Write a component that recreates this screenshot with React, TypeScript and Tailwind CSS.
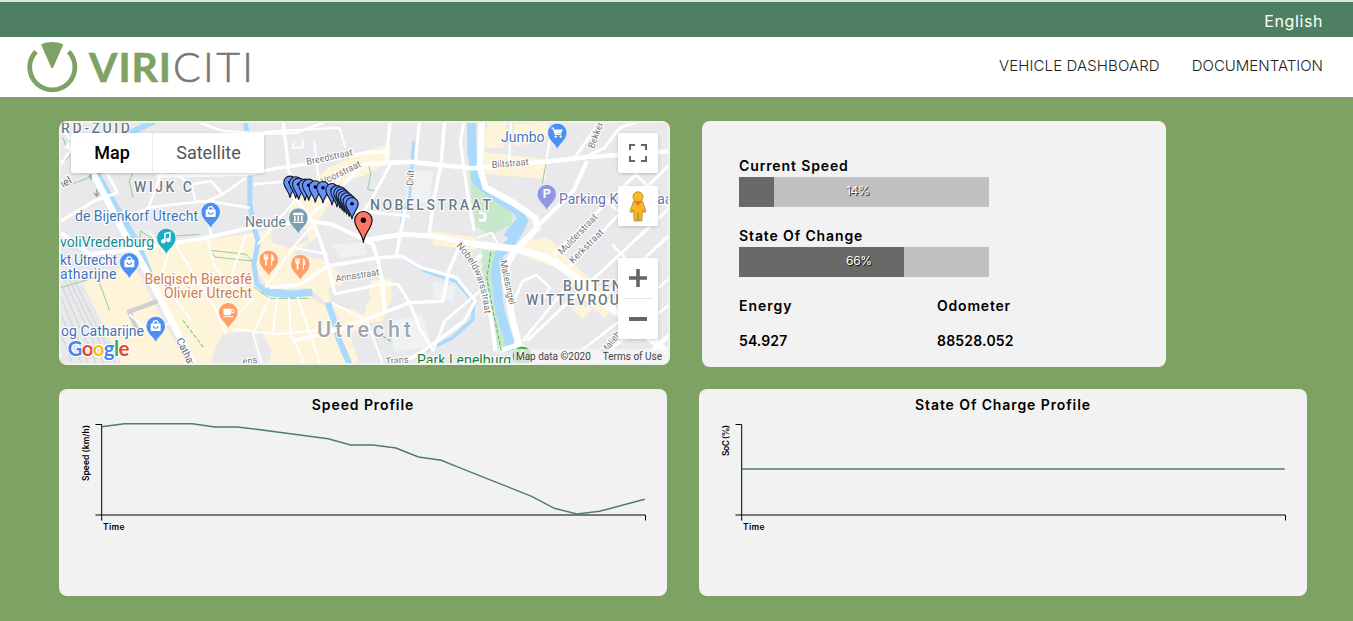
import type { ReactNode } from "react";

/* ---------- Logo ---------- */

function Logo() {
  return (
    <svg width="226" height="54" viewBox="26 40 226 54" aria-label="ViriCiti" role="img">
      <path d="M36 51.6 A22.6 22.6 0 1 0 68.6 51.6" fill="none" stroke="#7ea263" strokeWidth="4.8" />
      <path d="M41 44.3 Q52.2 39.6 63.4 44.3 L53.2 67.4 Q52.2 69 51.2 67.4 Z" fill="#7ea263" />
      <text x="89" y="81.5" textLength="82" fontSize="41" fontWeight="700" fill="#7ea263" stroke="#7ea263" strokeWidth="0.6" fontFamily="Lato, sans-serif">
        VIRI
      </text>
      <text x="173" y="81.5" textLength="80" fontSize="41" fontWeight="300" fill="#77777a" stroke="#77777a" strokeWidth="0.6" fontFamily="Lato, sans-serif">
        CITI
      </text>
    </svg>
  );
}

/* ---------- Map drawing ---------- */

const land = [
  "M215 385 L390 355 L500 335 L503 490 L535 518 L640 525 L690 560 L740 620 L770 725 L335 725 L205 430 Z",
  "M60 485 L190 425 L325 725 L160 725 Z",
  "M508 335 L585 300 L600 230 L700 235 L665 300 L660 350 L600 400 L690 420 L720 455 L740 560 L800 590 L760 650 L700 560 L640 500 L540 510 L503 440 Z",
  "M850 70 L850 120 L790 160 L700 195 L640 190 L690 140 L800 85 Z",
  "M1088 92 L1250 115 L1250 175 L1095 158 Z",
  "M1100 5 L1150 5 L1140 80 L1088 80 Z",
  "M1165 10 L1255 5 L1250 60 L1170 75 Z",
  "M960 330 L1070 350 L1070 388 L960 372 Z",
  "M1180 358 L1255 350 L1340 450 L1440 545 L1400 590 L1330 520 L1300 450 L1180 400 Z",
  "M1300 545 L1370 560 L1345 595 Z",
  "M800 480 L850 470 L855 530 L830 600 L780 610 Z",
];

const grey = [
  "M420 640 L520 625 L545 690 L540 725 L390 725 L405 670 Z",
  "M545 330 L590 300 L640 330 L640 360 L590 380 L545 365 Z",
  "M690 500 L790 480 L800 540 L740 560 L700 550 Z",
  "M740 640 L850 590 L840 650 L760 665 Z",
  "M10 160 L60 110 L80 190 L10 250 Z",
];

const pale = [
  "M900 150 L960 150 L950 240 L885 260 Z",
  "M700 370 L780 365 L790 400 L720 410 Z",
  "M960 480 L1020 500 L1010 540 L960 530 Z",
  "M850 600 L930 580 L960 680 L860 690 Z",
  "M250 40 L330 60 L300 120 L240 110 Z",
];

const park = [
  "M1052 110 L1066 110 L1078 185 L1130 235 L1165 280 L1160 310 L1108 345 L1070 315 L1058 230 Z",
  "M1085 388 L1140 392 L1122 450 L1130 560 L1160 690 L1128 690 L1108 540 L1088 470 Z",
];

const water: [string, number][] = [
  ["M245 0 L172 42", 6],
  ["M92 150 L126 219 L192 350 L210 395 L240 480", 7],
  ["M478 0 L484 60 L490 160 L490 250 L500 320 L512 360 L500 430 L508 490 L540 518 L595 524 L650 514", 5],
  ["M520 508 L595 520 L650 514", 7],
  ["M690 545 L706 600 L718 655 L745 728", 6],
  ["M1058 0 L1060 100 L1072 180 L1115 222 L1175 268 L1192 300 L1170 350 L1130 400 L1120 450 L1130 560 L1155 660 L1160 690", 9],
  ["M1186 300 L1150 350", 10],
  ["M910 60 L900 230 L880 285 L878 340", 3],
  ["M885 410 L945 452 L1020 482 L1064 540 L1062 595 L1010 650 L940 690", 3.5],
];

const roads: [string, number][] = [
  ["M20 70 L80 140 L165 330 L215 430 L345 728", 6.5],
  ["M5 300 L90 240 L150 215 L125 160", 3],
  ["M5 335 L80 400 L190 385 L380 350 L500 318 L640 300 L700 310 L765 345 L805 370 L817 410 L830 480 L836 580", 4],
  ["M785 358 L880 340 L960 345 L1060 368 L1180 385", 5],
  ["M1060 368 L1180 385 L1250 410 L1330 470 L1400 545 L1568 700", 7],
  ["M250 165 L480 160 L560 142 L640 128 L790 95 L850 92", 3.5],
  ["M360 5 L420 30 L540 38 L610 35 L680 5", 2.5],
  ["M370 50 L560 30 L720 20", 2],
  ["M780 130 L900 122 L1060 142 L1250 122 L1340 110 L1568 90", 4.5],
  ["M575 0 L590 150 L605 230 L650 300", 3],
  ["M850 0 L838 130", 3],
  ["M850 130 L800 240 L765 300", 3],
  ["M925 0 L915 120", 3],
  ["M888 265 L875 345 L865 410", 3.5],
  ["M990 0 L980 130 L960 250 L950 340", 3.5],
  ["M1040 0 L1030 60 L1040 150 L1050 230 L1065 330", 3],
  ["M1085 0 L1080 140 L1095 200 L1165 245 L1222 290 L1228 320 L1170 390 L1150 430 L1145 480 L1165 600 L1182 680", 6.5],
  ["M1160 0 L1155 130", 2],
  ["M1250 120 L1265 20", 2],
  ["M1320 115 L1390 0", 3],
  ["M1340 115 L1400 80 L1440 20 L1490 0", 3],
  ["M1225 320 L1320 210 L1355 120", 4],
  ["M1270 400 L1480 160 L1568 260", 3],
  ["M1200 660 L1320 530 L1568 260", 3],
  ["M1310 440 L1420 300 L1568 130", 3],
  ["M1395 530 L1568 340", 3],
  ["M1330 470 L1270 410", 3],
  ["M1160 560 L1190 480 L1225 462 L1260 500 L1235 545", 2.5],
  ["M1300 500 L1260 560 L1190 660", 2.5],
  ["M1300 725 L1450 590 L1568 470", 2.5],
  ["M1370 725 L1568 550", 2.5],
  ["M1490 725 L1568 640", 4],
  ["M1130 690 L1180 670 L1240 725", 5],
  ["M690 435 L820 410 L880 406 L930 440 L1020 470 L1068 540 L1040 600 L930 695 L880 725", 3.5],
  ["M706 520 L830 488 L870 490 L900 545 L925 620 L960 690", 3],
  ["M600 660 L720 625 L840 572 L900 545 L985 540 L1000 450 L1030 370", 3.5],
  ["M1085 400 L1060 430 L1090 500 L1110 600 L1120 690", 4],
  ["M1090 500 L990 600 L960 690", 2.5],
  ["M540 530 L498 640 L520 725", 2],
  ["M560 530 L548 640", 2],
  ["M590 530 L595 640 L630 725", 2],
  ["M612 528 L645 640 L670 725", 2],
  ["M450 625 L560 640 L720 620", 2],
  ["M430 610 L500 530", 2],
  ["M650 300 L668 350 L690 430 L708 520", 3.5],
  ["M540 500 L620 490 L690 435", 3.5],
  ["M530 500 L600 380 L660 300", 2],
  ["M510 370 L560 300 L605 240", 2],
  ["M600 380 L690 400", 2],
  ["M700 545 L790 600 L830 725", 2],
  ["M500 190 L590 180 L620 220", 2.5],
  ["M640 290 L740 180 L780 130", 3],
  ["M760 270 L900 285", 3],
  ["M300 80 L260 165 L230 260 L160 300", 2.5],
  ["M300 160 L340 190 L390 180 L420 220 L380 240 L390 350", 2.5],
  ["M420 220 L480 170", 2.5],
  ["M340 190 L350 240 L400 240", 2],
  ["M230 260 L300 250 L380 240 L490 260", 2.5],
  ["M230 330 L280 400 L260 470 L340 600", 2],
  ["M300 370 L345 460 L400 560 L430 640", 2],
  ["M380 350 L400 440 L480 540", 2],
  ["M440 470 L480 340", 2],
  ["M5 20 L40 70 L5 130", 2.5],
  ["M180 580 L240 640 L290 600", 2],
  ["M1075 350 L1110 335 L1125 365", 2],
  ["M1078 275 L1094 278 L1092 298 L1078 298", 2.5],
  ["M605 60 L600 80 L625 80 L625 55", 2],
  ["M720 20 L735 80", 2],
  ["M655 60 L665 165", 2],
  ["M1460 300 L1400 230", 2.5],
  ["M1500 470 L1420 370", 2.5],
];

const rails = [
  "M5 490 L95 728", "M12 470 L115 728", "M5 530 L75 728", "M22 465 L130 728", "M5 580 L58 728", "M32 460 L145 728", "M5 640 L35 728",
];

const greenLines = [
  "M5 130 L28 105 L10 50", "M200 130 L180 180 L190 230", "M388 388 L480 400 L495 420 L400 408 Z", "M90 440 L130 570",
  "M795 132 L800 160 L792 205 L820 212", "M1250 125 L1240 190", "M1350 115 L1430 105", "M200 400 L210 330 L235 350 L360 340",
  "M5 500 L90 470", "M20 195 L110 155", "M500 498 L540 532 L640 532",
];

const dashedGreen = ["M318 598 L345 640 L370 678", "M1108 395 L1098 470 L1112 560 L1135 690", "M830 645 L850 660 L855 640"];

type PinProps = { x: number; y: number; color: string; children?: ReactNode };

function Poi({ x, y, color, children }: PinProps) {
  return (
    <g transform={`translate(${x} ${y})`}>
      <path
        d="M0 16.5 C-1.2 11.5 -9.6 7.5 -9.6 0 A9.6 9.6 0 0 1 9.6 0 C9.6 7.5 1.2 11.5 0 16.5 Z"
        fill={color}
        stroke="#ffffff"
        strokeOpacity="0.6"
        strokeWidth="0.8"
      />
      {children}
    </g>
  );
}

function Bag() {
  return (
    <g>
      <rect x="-5" y="-2.5" width="10" height="7.5" rx="1" fill="#fff" />
      <path d="M-2.4 -2 V-3 A2.4 2.4 0 0 1 2.4 -3 V-2" fill="none" stroke="#fff" strokeWidth="1.3" />
      <path d="M-2.2 0 A2.2 2.2 0 0 0 2.2 0" fill="none" stroke="#4a90f4" strokeWidth="1.1" />
    </g>
  );
}

function Cutlery() {
  return (
    <g stroke="#fff">
      <path d="M-4.8 -5.4 V-1.6 Q-4.6 0 -2.8 0 Q-1 0 -0.8 -1.6 V-5.4 Z" fill="#fff" strokeWidth="0.4" />
      <path d="M-2.8 0 V5.6" strokeWidth="1.6" />
      <path d="M-3.4 -5.6 V-2.6 M-2.2 -5.6 V-2.6" stroke="#ff9e67" strokeWidth="0.5" />
      <path d="M3 5.6 V-5.4 Q4.8 -4.4 4.6 0.6 H2.6" fill="#fff" strokeWidth="1" />
    </g>
  );
}

type LabelProps = {
  x: number;
  y: number;
  w: number;
  children: string;
  size?: number;
  color?: string;
  weight?: number;
  rotate?: number;
  halo?: number;
};

function Label({ x, y, w, children, size = 14, color = "#6b7b88", weight = 400, rotate = 0, halo = 2.2 }: LabelProps) {
  return (
    <text
      x={0}
      y={0}
      transform={`translate(${x} ${y}) rotate(${rotate})`}
      textLength={w}
      fontSize={size}
      fontWeight={weight}
      fill={color}
      stroke="#ffffff"
      strokeWidth={halo}
      strokeLinejoin="round"
      paintOrder="stroke"
      fontFamily="Roboto, sans-serif"
    >
      {children}
    </text>
  );
}

const track = [
  [290, 182.3], [295.7, 183], [298.7, 184.3], [305, 185.3], [308.7, 185.3], [315.3, 187], [323, 187.7], [332, 189.7],
  [337, 191.7], [340, 193], [342.3, 195], [344.3, 197], [346.7, 199], [349.3, 201.3], [352, 203.7],
];

function MapCanvas() {
  return (
    <svg className="block" width="607" height="240" viewBox="61 123 607 240">
      <rect x="61" y="123" width="607" height="240" fill="#e9e9eb" />
      <g transform="translate(59 121) scale(0.38967 0.33333)" fill="none" strokeLinejoin="round">
        {land.map((d) => <path key={d} d={d} fill="#fdf4da" />)}
        {grey.map((d) => <path key={d} d={d} fill="#e9e9ea" />)}
        {pale.map((d) => <path key={d} d={d} fill="#f0f1f3" />)}
        {park.map((d) => <path key={d} d={d} fill="#c8e8cb" />)}
        {rails.map((d) => <path key={d} d={d} stroke="#d3d6da" strokeWidth="1.2" vectorEffect="non-scaling-stroke" />)}
        <path d="M265 535 L180 572 L205 640" stroke="#cfcfd0" strokeWidth="4.5" vectorEffect="non-scaling-stroke" />
        {water.map(([d, w]) => <path key={d} d={d} stroke="#a9d9fd" strokeWidth={w} vectorEffect="non-scaling-stroke" />)}
        {greenLines.map((d) => <path key={d} d={d} stroke="#8fcf9f" strokeWidth="1" vectorEffect="non-scaling-stroke" />)}
        {roads.map(([d, w]) => <path key={d} d={d} stroke="#ffffff" strokeWidth={w} vectorEffect="non-scaling-stroke" />)}
        {dashedGreen.map((d) => (
          <path key={d} d={d} stroke="#4db36a" strokeWidth="1" strokeDasharray="4 2" vectorEffect="non-scaling-stroke" />
        ))}
        <path d="M97 205 V225 M90 215 L97 226 L104 215 M82 178 V160 L77 168" stroke="#9aa0a6" strokeWidth="1.4" vectorEffect="non-scaling-stroke" />
      </g>

      <Label x={61} y={132.5} w={69} size={14} weight={500}>RD-ZUID</Label>
      <Label x={134} y={192} w={58} size={14} weight={500}>WIJK C</Label>
      <Label x={370} y={210} w={121} size={14} weight={500}>NOBELSTRAAT</Label>
      <Label x={563} y={291} w={73} size={14} weight={500}>BUITENW</Label>
      <Label x={526} y={305} w={107} size={14} weight={500}>WITTEVROUW</Label>
      <Label x={317} y={337} w={94} size={21.5} weight={500} color="#9fa6ae">Utrecht</Label>

      <Label x={307} y={165} w={47} size={9.5} rotate={-12} color="#757575">Breedstraat</Label>
      <Label x={323} y={185} w={43} size={9.5} rotate={-26} color="#757575">Voorstraat</Label>
      <Label x={413} y={186} w={16} size={9.5} rotate={-86} color="#757575">Drift</Label>
      <Label x={492} y={168} w={37} size={9.5} rotate={-5} color="#757575">Biltstraat</Label>
      <Label x={594} y={149} w={32} size={9.5} rotate={-70} color="#757575">Bekkers</Label>
      <Label x={336} y={282} w={44} size={9.5} rotate={-9} color="#757575">Annastraat</Label>
      <Label x={562} y={255} w={52} size={9.5} rotate={-46} color="#757575">Mulderstraat</Label>
      <Label x={573} y={264} w={44} size={9.5} rotate={-45} color="#757575">Kerkstraat</Label>
      <path id="nobeldwars" d="M456 246 C468 259 480 274 484 308 L485 316" fill="none" />
      <text fontSize="9.5" fill="#757575" stroke="#fff" strokeWidth="2.2" paintOrder="stroke" fontFamily="Roboto, sans-serif">
        <textPath href="#nobeldwars">Nobeldwarsstraat</textPath>
      </text>
      <Label x={500} y={261} w={45} size={9.5} rotate={78} color="#757575">Maliesingel</Label>
      <Label x={605} y={355} w={41} size={9.5} rotate={-52} color="#757575">Maliebaan</Label>
      <Label x={386} y={364.5} w={23} size={9.5} rotate={-5} color="#757575">Trans</Label>
      <Label x={243} y={365} w={15} size={9.5} rotate={-9} color="#757575">ens</Label>
      <Label x={176} y={340} w={46} size={10.5} rotate={64} color="#5f6368">Catharijne</Label>
      <Label x={63} y={188} w={11} size={11} rotate={-30} color="#5f6368">iel</Label>

      <Label x={75} y={221} w={123} color="#4272b8">de Bijenkorf Utrecht</Label>
      <Label x={60} y={247} w={94} color="#15868f">voliVredenburg</Label>
      <Label x={60} y={265} w={57} color="#4272b8">kt Utrecht</Label>
      <Label x={60} y={279} w={56.5} color="#4272b8">atharijne</Label>
      <Label x={61} y={336} w={83} color="#4272b8">og Catharijne</Label>
      <Label x={144.5} y={284} w={107.5} color="#d07a50">Belgisch Biercafé</Label>
      <Label x={164} y={298} w={88} color="#d07a50">Olivier Utrecht</Label>
      <Label x={245} y={227} w={41} color="#607d8b">Neude</Label>
      <Label x={501} y={142} w={43.5} color="#3f78c4">Jumbo</Label>
      <Label x={559} y={203.5} w={118} color="#6b74b8">Parking Kruisstraat</Label>
      <Label x={417} y={364.5} w={94} color="#188038">Park Lepelburg</Label>

      <Poi x={210.7} y={212} color="#4a90f4"><Bag /></Poi>
      <Poi x={129.3} y={262.3} color="#4a90f4"><Bag /></Poi>
      <Poi x={155.7} y={326} color="#4a90f4"><Bag /></Poi>
      <Poi x={166.3} y={238} color="#14b0c2">
        <path d="M-1.4 3.2 V-4.4 L3.6 -5.6 V1.6" fill="none" stroke="#fff" strokeWidth="1.6" />
        <circle cx="-3" cy="3.2" r="2.3" fill="#fff" />
        <circle cx="2" cy="2" r="2.3" fill="#fff" />
      </Poi>
      <Poi x={228.3} y={312.3} color="#ff9e67">
        <path d="M-5 -3.6 H3.4 V0.4 Q3 3 0.6 3 H-2.2 Q-4.8 3 -5 0.4 Z M-5 4 H5 V5 H-5 Z" fill="#fff" />
        <path d="M3.4 -2.6 H5.6 V0.2 H3.4" fill="none" stroke="#fff" strokeWidth="1" />
      </Poi>
      <Poi x={268.7} y={260} color="#ff9e67"><Cutlery /></Poi>
      <Poi x={300.3} y={264} color="#ff9e67"><Cutlery /></Poi>
      <Poi x={298.3} y={217.7} color="#7b9eb0">
        <path d="M-5.5 -3 L-4.5 -5 H4.5 L5.5 -3 V-2.4 H-5.5 Z M-5.5 4 H5.5 V5.2 H-5.5 Z M-4.3 -1.8 H-2.7 V3.4 H-4.3 Z M-0.8 -1.8 H0.8 V3.4 H-0.8 Z M2.7 -1.8 H4.3 V3.4 H2.7 Z" fill="#fff" />
      </Poi>
      <Poi x={557.3} y={132.8} color="#4a90f4">
        <path d="M-6 -4.6 H-4.2 L-2 1.6 H4 " fill="none" stroke="#fff" strokeWidth="1.2" />
        <path d="M-3.8 -3.4 H5.4 L3.8 0.6 H-2.3 Z" fill="#fff" />
        <circle cx="-1.6" cy="3.8" r="1.2" fill="#fff" />
        <circle cx="3.4" cy="3.8" r="1.2" fill="#fff" />
      </Poi>
      <Poi x={546.7} y={194} color="#8f97de">
        <text x="-3.9" y="4.4" fontSize="12.5" fontWeight="700" fill="#fff" fontFamily="Roboto, sans-serif">P</text>
      </Poi>
      <circle cx="522.3" cy="356" r="9.6" fill="#4caf50" />
      <path d="M522.3 361 V350 M519.5 355 L522.3 350 L525 355 Z" stroke="#fff" strokeWidth="1.4" fill="#fff" />

      {track.map(([x, y]) => (
        <g key={x} transform={`translate(${x} ${y})`}>
          <path
            d="M0 15.4 C-0.6 9 -6.2 5.6 -6.2 0 A6.2 6.2 0 0 1 6.2 0 C6.2 5.6 0.6 9 0 15.4 Z"
            fill="#6991fd"
            stroke="#101820"
            strokeWidth="1.1"
          />
          <circle cy="0" r="1.8" fill="#000" />
        </g>
      ))}
      <g transform="translate(363.4 220.2)">
        <path
          d="M0 22.4 C-0.8 12.5 -8.7 8 -8.7 0 A8.7 8.7 0 0 1 8.7 0 C8.7 8 0.8 12.5 0 22.4 Z"
          fill="#fd7567"
          stroke="#000"
          strokeWidth="1.1"
        />
        <circle cy="0" r="2.6" fill="#000" />
      </g>

      <text
        x="67.5"
        y="355.5"
        textLength="62"
        fontSize="20.5"
        fontWeight="700"
        stroke="#fff"
        strokeWidth="2.2"
        paintOrder="stroke"
        fontFamily="Lato, sans-serif"
      >
        <tspan fill="#4285f4">G</tspan>
        <tspan fill="#ea4335">o</tspan>
        <tspan fill="#fbbc05">o</tspan>
        <tspan fill="#4285f4">g</tspan>
        <tspan fill="#34a853">l</tspan>
        <tspan fill="#ea4335">e</tspan>
      </text>
    </svg>
  );
}

function MapCard() {
  return (
    <section className="relative h-[244px] w-[611px] overflow-hidden rounded-lg bg-[#f2f2f2] p-0.5 font-[Roboto,sans-serif]">
      <MapCanvas />
      <div className="absolute top-3 left-3 flex h-10 rounded-xs bg-white text-lg shadow-[0_1px_4px_-1px_rgba(0,0,0,0.3)]">
        <button className="w-[82px] border-r border-[#ececec] pl-px font-medium text-black">Map</button>
        <button className="w-[111px] text-[#565656]">Satellite</button>
      </div>
      <div className="absolute top-3 right-3 flex flex-col">
        <button className="flex size-10 items-center justify-center rounded-xs bg-white shadow-[0_1px_4px_-1px_rgba(0,0,0,0.3)]">
          <svg width="18" height="18" viewBox="0 0 18 18" fill="#666">
            <path d="M0 0v6h2V2h4V0H0zm16 0h-4v2h4v4h2V0h-2zm0 16h-4v2h6v-6h-2v4zM2 12H0v6h6v-2H2v-4z" />
          </svg>
        </button>
        <button className="mt-[13px] flex size-10 items-center justify-center rounded-xs bg-white shadow-[0_1px_4px_-1px_rgba(0,0,0,0.3)]">
          <svg width="18" height="31" viewBox="0 0 18 31">
            <path d="M4.6 10 H13.4 L17 20.5 L14.8 21.5 L13.4 18.5 L12.8 30 H9.4 V22 H8.6 V30 H5.2 L4.6 18.5 L3.2 21.5 L1 20.5 Z" fill="#fbb81c" stroke="#a98232" strokeWidth="0.8" />
            <circle cx="9" cy="5.8" r="5" fill="#fbb81c" stroke="#a98232" strokeWidth="0.8" />
            <path d="M5 10.3 H13 L9 15 Z" fill="#e27d23" />
          </svg>
        </button>
        <div className="mt-8 flex h-[81px] w-10 flex-col items-center rounded-xs bg-white shadow-[0_1px_4px_-1px_rgba(0,0,0,0.3)]">
          <button className="flex h-10 items-center justify-center">
            <svg width="18" height="18" viewBox="0 0 18 18" fill="#666">
              <path d="M7.2 0h3.6v7.2H18v3.6h-7.2V18H7.2v-7.2H0V7.2h7.2z" />
            </svg>
          </button>
          <div className="h-px w-[30px] bg-[#e6e6e6]" />
          <button className="flex h-10 items-center justify-center">
            <svg width="18" height="4" viewBox="0 0 18 4" fill="#666">
              <path d="M0 0h18v4H0z" />
            </svg>
          </button>
        </div>
      </div>
      <div className="absolute right-0.5 bottom-0.5 flex h-3.5 items-center gap-3 bg-[#f5f5f5]/75 pr-1.5 pl-0.5 text-[10px] text-[#444]">
        <span>Map data ©2020</span>
        <span>Terms of Use</span>
      </div>
    </section>
  );
}

/* ---------- Vehicle status ---------- */

function Meter({ title, value }: { title: string; value: number }) {
  return (
    <div className="h-[70px]">
      <h3 className="h-5 text-sm leading-5 font-semibold tracking-[0.88px]">{title}</h3>
      <div className="relative mt-px h-[30px] w-[250px] bg-[#c0c0c0]">
        <div className="h-full bg-[#696969]" style={{ width: `${value}%` }} />
        <span className="absolute top-1 left-[107px] text-xs leading-5 tracking-[-0.3px] text-white [text-shadow:1px_1px_1px_#000]">
          {value}%
        </span>
      </div>
    </div>
  );
}

function StatusCard() {
  return (
    <section className="h-[246px] w-[464px] rounded-lg bg-[#f2f2f2] px-[37px] pt-[35px] text-black">
      <Meter title="Current Speed" value={14} />
      <Meter title="State Of Change" value={66} />
      <dl className="grid grid-cols-[198px_1fr] text-sm leading-5 font-semibold">
        <div className="flex flex-col gap-[15px]">
          <dt className="tracking-[1px]">Energy</dt>
          <dd className="tracking-[0.1px]">54.927</dd>
        </div>
        <div className="flex flex-col gap-[15px]">
          <dt className="tracking-[0.8px]">Odometer</dt>
          <dd className="tracking-[0.2px]">88528.052</dd>
        </div>
      </dl>
    </section>
  );
}

/* ---------- Charts ---------- */

const speedLevels = [
  125, 116, 116, 116, 116, 126, 126, 134, 143, 152, 161, 180, 180, 189, 216, 226, 253, 280, 307, 334, 370, 387, 379, 361, 343,
];
const socLevels = [252, 252];

function Chart({ title, yLabel, yWidth, levels }: { title: string; yLabel: string; yWidth: number; levels: number[] }) {
  const step = 543 / (levels.length - 1);
  const points = levels.map((v, i) => `${42.8 + i * step},${v / 3 - 4 + 26 - 26}`).join(" ");
  return (
    <section className="h-[207px] w-[608px] overflow-hidden rounded-lg bg-[#f2f2f2] pt-1.5 text-black">
      <h3 className="h-5 text-center text-sm leading-5 font-semibold tracking-[0.9px]">{title}</h3>
      <svg className="block" width="608" height="160" viewBox="0 26 608 160" fontFamily="Inter, sans-serif" fontWeight="600" fontSize="8.5">
        <path d="M36.5 35.5 H42.7 V126 H36.5" fill="none" stroke="#000" />
        <path d="M42.7 131.5 V126 H586.5 V131.5" fill="none" stroke="#000" />
        <polyline points={points} fill="none" stroke="#4e7f62" strokeWidth="1.5" />
        <text x="44" y="140.5" textLength="21.5">Time</text>
        <text transform="translate(30 92) rotate(-90)" x={56 - yWidth} textLength={yWidth}>{yLabel}</text>
      </svg>
    </section>
  );
}

/* ---------- Page ---------- */

export default function App() {
  return (
    <div className="h-[621px] w-full overflow-hidden bg-[#7ea263] font-[Inter,sans-serif]">
      <div className="flex h-[37px] items-center justify-end border-t-2 border-[#dbe6e0] bg-[#4e7f62] pt-0.5 pr-[30px] text-base text-white">
        <span className="tracking-[0.6px]">English</span>
      </div>
      <header className="flex h-[60px] items-center justify-between bg-white pr-[30px] pl-[26px]">
        <Logo />
        <nav className="flex gap-8 pb-[3px] text-[15px] leading-5 font-light text-[#222]">
          <a className="tracking-[0.12px]">VEHICLE DASHBOARD</a>
          <a>DOCUMENTATION</a>
        </nav>
      </header>
      <main className="flex flex-col gap-[22px] pt-6 pl-[59px]">
        <div className="flex items-start gap-8">
          <MapCard />
          <StatusCard />
        </div>
        <div className="flex gap-8">
          <Chart title="Speed Profile" yLabel="Speed (km/h)" yWidth={56} levels={speedLevels} />
          <Chart title="State Of Charge Profile" yLabel="SoC (%)" yWidth={31} levels={socLevels} />
        </div>
      </main>
    </div>
  );
}
